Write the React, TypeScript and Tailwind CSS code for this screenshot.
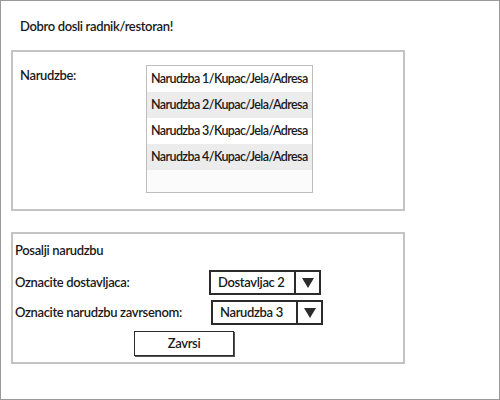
import React from "react";

const orders = [
  "Narudzba 1/Kupac/Jela/Adresa",
  "Narudzba 2/Kupac/Jela/Adresa",
  "Narudzba 3/Kupac/Jela/Adresa",
  "Narudzba 4/Kupac/Jela/Adresa",
];

const Dropdown: React.FC<{ value: string; className?: string }> = ({ value, className }) => (
  <div className={`flex h-[25px] border-2 border-[#2b2b2b] bg-white ${className ?? ""}`}>
    <div className="flex flex-1 items-center whitespace-nowrap pl-[7px]">{value}</div>
    <div className="flex w-[25px] items-center justify-center border-l-2 border-[#2b2b2b]">
      <svg width="12" height="10" viewBox="0 0 12 10">
        <path d="M0 0 H12 L6 10 Z" fill="#2b2b2b" />
      </svg>
    </div>
  </div>
);

export default function App() {
  return (
    <div
      className="w-[500px] h-[400px] border border-[#9a9a9a] bg-white text-[13px] font-semibold tracking-[-0.35px] text-[#1a1a1a]"
      style={{ fontFamily: "Lato, 'Open Sans', sans-serif" }}
    >
      <div className="pl-[19px] pt-[16px] leading-[18px]">Dobro dosli radnik/restoran!</div>

      <div className="ml-[10px] mt-[15px] flex h-[161px] w-[394px] border-2 border-[#c3c3c3]">
        <div className="w-[133px] pl-[7px] pt-[14px] leading-[18px]">Narudzbe:</div>
        <div className="mt-[13px] flex h-[128px] w-[167px] flex-col border border-[#bdbdbd] bg-[#fbfbfb]">
          {orders.map((o, i) => (
            <div
              key={o}
              className={`flex h-[26px] items-center whitespace-nowrap pl-[4px] text-[12.5px] tracking-[-0.6px] ${i % 2 === 1 ? "bg-[#ececec]" : "bg-white"}`}
            >
              {o}
            </div>
          ))}
        </div>
      </div>

      <div className="ml-[10px] mt-[21px] flex h-[132px] w-[394px] flex-col border-2 border-[#c3c3c3] px-[2px] pt-[7px]">
        <div className="leading-[18px]">Posalji narudzbu</div>
        <div className="mt-[11px] flex h-[25px] items-center">
          <span className="w-[194px]">Oznacite dostavljaca:</span>
          <Dropdown value="Dostavljac 2" className="w-[112px]" />
        </div>
        <div className="mt-[5px] flex h-[25px] items-center">
          <span className="w-[196px]">Oznacite narudzbu zavrsenom:</span>
          <Dropdown value="Narudzba 3" className="w-[112px]" />
        </div>
        <div className="mt-[6px] pl-[119px]">
          <button className="flex h-[25px] w-[100px] items-center justify-center border border-[#2b2b2b] bg-white shadow-[1px_1px_0_#555]">
            Zavrsi
          </button>
        </div>
      </div>
    </div>
  );
}
